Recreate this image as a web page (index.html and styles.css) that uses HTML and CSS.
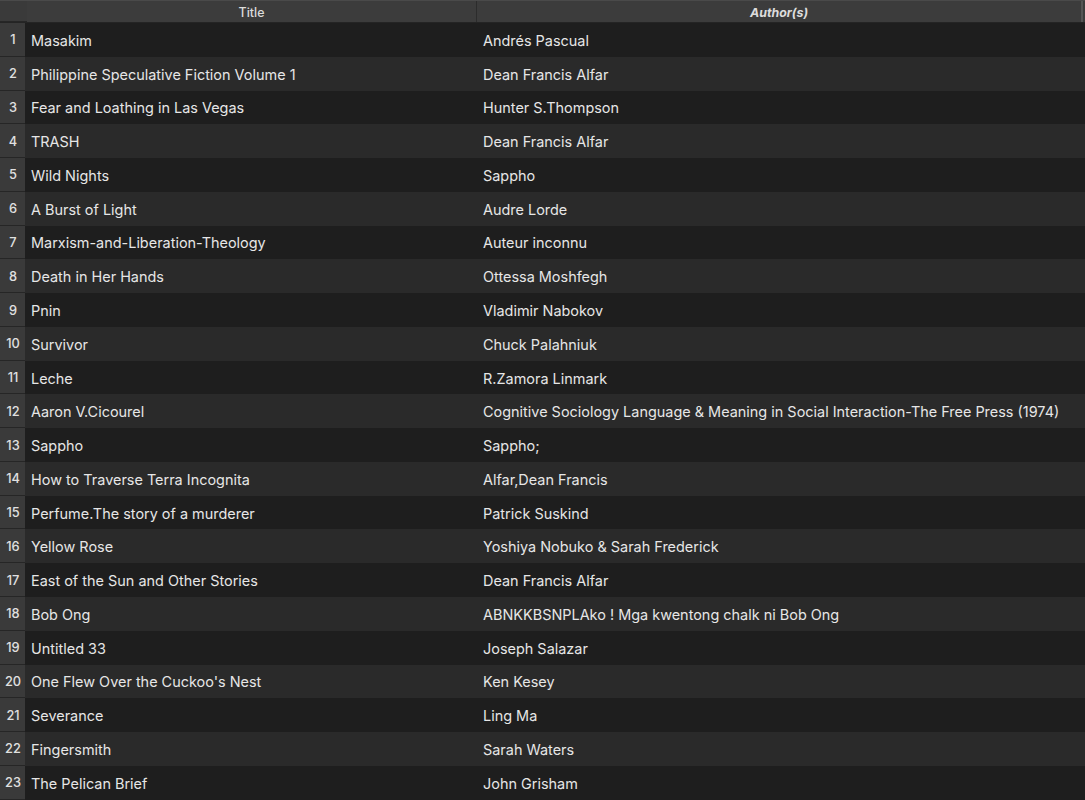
FILE: index.html
```html
<!DOCTYPE html>
<html>
<head>
<meta charset="utf-8">
<link rel="stylesheet" href="styles.css">
</head>
<body>
<div class="table">
  <div class="head">
    <div class="hcell num"></div>
    <div class="hcell title">Title</div>
    <div class="hcell author">Author(s)</div>
  </div>
  <div class="row"><div class="num">1</div><div class="cell title">Masakim</div><div class="cell author">Andrés Pascual</div></div>
  <div class="row"><div class="num">2</div><div class="cell title">Philippine Speculative Fiction Volume 1</div><div class="cell author">Dean Francis Alfar</div></div>
  <div class="row"><div class="num">3</div><div class="cell title">Fear and Loathing in Las Vegas</div><div class="cell author">Hunter S.Thompson</div></div>
  <div class="row"><div class="num">4</div><div class="cell title">TRASH</div><div class="cell author">Dean Francis Alfar</div></div>
  <div class="row"><div class="num">5</div><div class="cell title">Wild Nights</div><div class="cell author">Sappho</div></div>
  <div class="row"><div class="num">6</div><div class="cell title">A Burst of Light</div><div class="cell author">Audre Lorde</div></div>
  <div class="row"><div class="num">7</div><div class="cell title">Marxism-and-Liberation-Theology</div><div class="cell author">Auteur inconnu</div></div>
  <div class="row"><div class="num">8</div><div class="cell title">Death in Her Hands</div><div class="cell author">Ottessa Moshfegh</div></div>
  <div class="row"><div class="num">9</div><div class="cell title">Pnin</div><div class="cell author">Vladimir Nabokov</div></div>
  <div class="row"><div class="num">10</div><div class="cell title">Survivor</div><div class="cell author">Chuck Palahniuk</div></div>
  <div class="row"><div class="num">11</div><div class="cell title">Leche</div><div class="cell author">R.Zamora Linmark</div></div>
  <div class="row"><div class="num">12</div><div class="cell title">Aaron V.Cicourel</div><div class="cell author">Cognitive Sociology Language &amp; Meaning in Social Interaction-The Free Press (1974)</div></div>
  <div class="row"><div class="num">13</div><div class="cell title">Sappho</div><div class="cell author">Sappho;</div></div>
  <div class="row"><div class="num">14</div><div class="cell title">How to Traverse Terra Incognita</div><div class="cell author">Alfar,Dean Francis</div></div>
  <div class="row"><div class="num">15</div><div class="cell title">Perfume.The story of a murderer</div><div class="cell author">Patrick Suskind</div></div>
  <div class="row"><div class="num">16</div><div class="cell title">Yellow Rose</div><div class="cell author">Yoshiya Nobuko &amp; Sarah Frederick</div></div>
  <div class="row"><div class="num">17</div><div class="cell title">East of the Sun and Other Stories</div><div class="cell author">Dean Francis Alfar</div></div>
  <div class="row"><div class="num">18</div><div class="cell title">Bob Ong</div><div class="cell author">ABNKKBSNPLAko ! Mga kwentong chalk ni Bob Ong</div></div>
  <div class="row"><div class="num">19</div><div class="cell title">Untitled 33</div><div class="cell author">Joseph Salazar</div></div>
  <div class="row"><div class="num">20</div><div class="cell title">One Flew Over the Cuckoo's Nest</div><div class="cell author">Ken Kesey</div></div>
  <div class="row"><div class="num">21</div><div class="cell title">Severance</div><div class="cell author">Ling Ma</div></div>
  <div class="row"><div class="num">22</div><div class="cell title">Fingersmith</div><div class="cell author">Sarah Waters</div></div>
  <div class="row"><div class="num">23</div><div class="cell title">The Pelican Brief</div><div class="cell author">John Grisham</div></div>
</div>
</body>
</html>
```

FILE: styles.css
```css
html, body {
  margin: 0;
  padding: 0;
  background: #1e1e1e;
  overflow: hidden;
}
.table {
  width: 1085px;
  font-family: Inter, "Liberation Sans", Arial, sans-serif;
  color: #e6e6e6;
}
.head {
  display: grid;
  grid-template-columns: 27px 450px 1fr;
  height: 23px;
  box-sizing: border-box;
  background: #3c3c3c;
  border-top: 1px solid #4a4a4a;
  border-bottom: 1px solid #242424;
  font-size: 12.4px;
  color: #dcdcdc;
}
.hcell {
  display: flex;
  align-items: center;
  justify-content: center;
  font-weight: 500;
  padding-top: 1px;
}
.hcell.title {
  border-right: 1px solid #2c2c2c;
}
.hcell.author {
  font-weight: 700;
  font-style: italic;
  border-right: 2px solid #555;
  margin-right: 2px;
}
.row {
  display: grid;
  grid-template-columns: 25px 452px 1fr;
  height: 33.78px;
  font-size: 14.45px;
}
.row:nth-child(even) { background: #1e1e1e; }
.row:nth-child(odd) { background: #2a2a2a; }
.num {
  display: flex;
  align-items: center;
  justify-content: center;
  padding-left: 1px;
  padding-top: 1px;
  box-sizing: border-box;
  background: #3a3a3a;
  border-bottom: 1px solid #262626;
  font-size: 12.8px;
  font-weight: 500;
  color: #e0e0e0;
}
.cell {
  display: flex;
  align-items: center;
  white-space: nowrap;
  padding-top: 1px;
  box-sizing: border-box;
}
.cell.title { padding-left: 6px; }
.cell.author { padding-left: 6px; }
```
